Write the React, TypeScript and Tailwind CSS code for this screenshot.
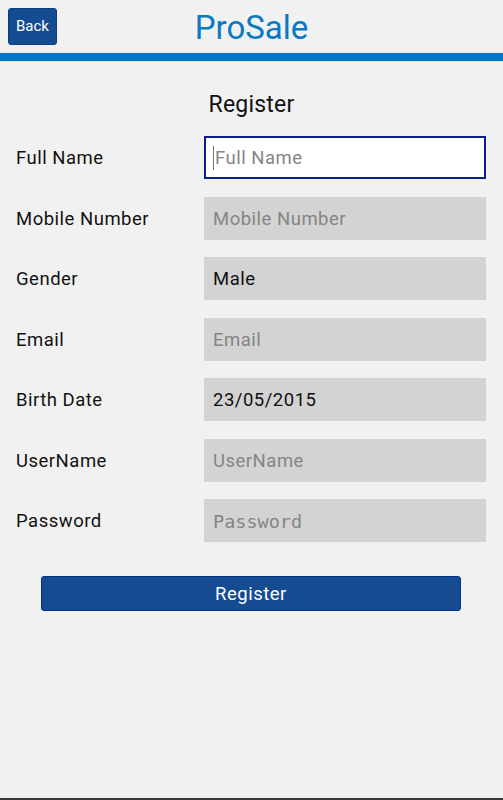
const fields: { label: string; value?: string; placeholder?: string; mono?: boolean; active?: boolean }[] = [
  { label: "Full Name", placeholder: "Full Name", active: true },
  { label: "Mobile Number", placeholder: "Mobile Number" },
  { label: "Gender", value: "Male" },
  { label: "Email", placeholder: "Email" },
  { label: "Birth Date", value: "23/05/2015" },
  { label: "UserName", placeholder: "UserName" },
  { label: "Password", placeholder: "Password", mono: true },
];

export default function App() {
  return (
    <div className="flex h-[800px] w-[503px] flex-col bg-[#f1f1f1] font-['Roboto',sans-serif]">
      <header className="relative flex h-[53px] items-center justify-center">
        <button className="absolute left-[8px] top-[8px] flex h-[37px] w-[49px] items-center justify-center rounded-[3px] border border-[#0f3d7a] bg-[#154b91] text-[15px] text-white">
          Back
        </button>
        <h1 className="pt-[2px] text-[33px] leading-none text-[#0a79c2]">ProSale</h1>
      </header>
      <div className="h-[8px] bg-[#0077c0]" />
      <div className="h-[1px] bg-[#e4e4e4]" />

      <main className="flex flex-1 flex-col pt-[29px]">
        <h2 className="text-center text-[23px] leading-[28px] tracking-[0.2px] text-[#111]">Register</h2>

        <div className="mt-[17px] flex flex-col gap-[17.5px] pr-[17px]">
          {fields.map((f) => (
            <div key={f.label} className="flex h-[43px] items-center">
              <span className="w-[204px] pl-[16px] pt-[3px] text-[18.5px] tracking-[0.5px] text-[#111]">{f.label}</span>
              <div
                className={
                  f.active
                    ? "relative flex h-full flex-1 items-center border-2 border-[#0b1f8c] bg-white pl-[7px]"
                    : "flex h-full flex-1 items-center bg-[#d3d3d3] pl-[9px]"
                }
              >
                {f.active && <span className="mr-[1px] h-[24px] w-[1px] bg-[#777]" />}
                <span
                  className={`pt-[3px] ${f.value ? "text-[#111]" : "text-[#858585]"} ${
                    f.mono
                      ? "font-['DejaVu_Sans_Mono',monospace] text-[18.5px]"
                      : "text-[18.5px] tracking-[0.5px]"
                  }`}
                >
                  {f.value ?? f.placeholder}
                </span>
              </div>
            </div>
          ))}
        </div>

        <div className="mt-[34px] px-[41px] pr-[42px]">
          <button className="h-[35px] w-full rounded-[3px] border border-[#0a2f86] bg-[#154b91] pt-[2px] text-[18.5px] tracking-[0.5px] text-white">
            Register
          </button>
        </div>
      </main>
      <div className="h-[2px] bg-[#3a3a3a]" />
    </div>
  );
}
